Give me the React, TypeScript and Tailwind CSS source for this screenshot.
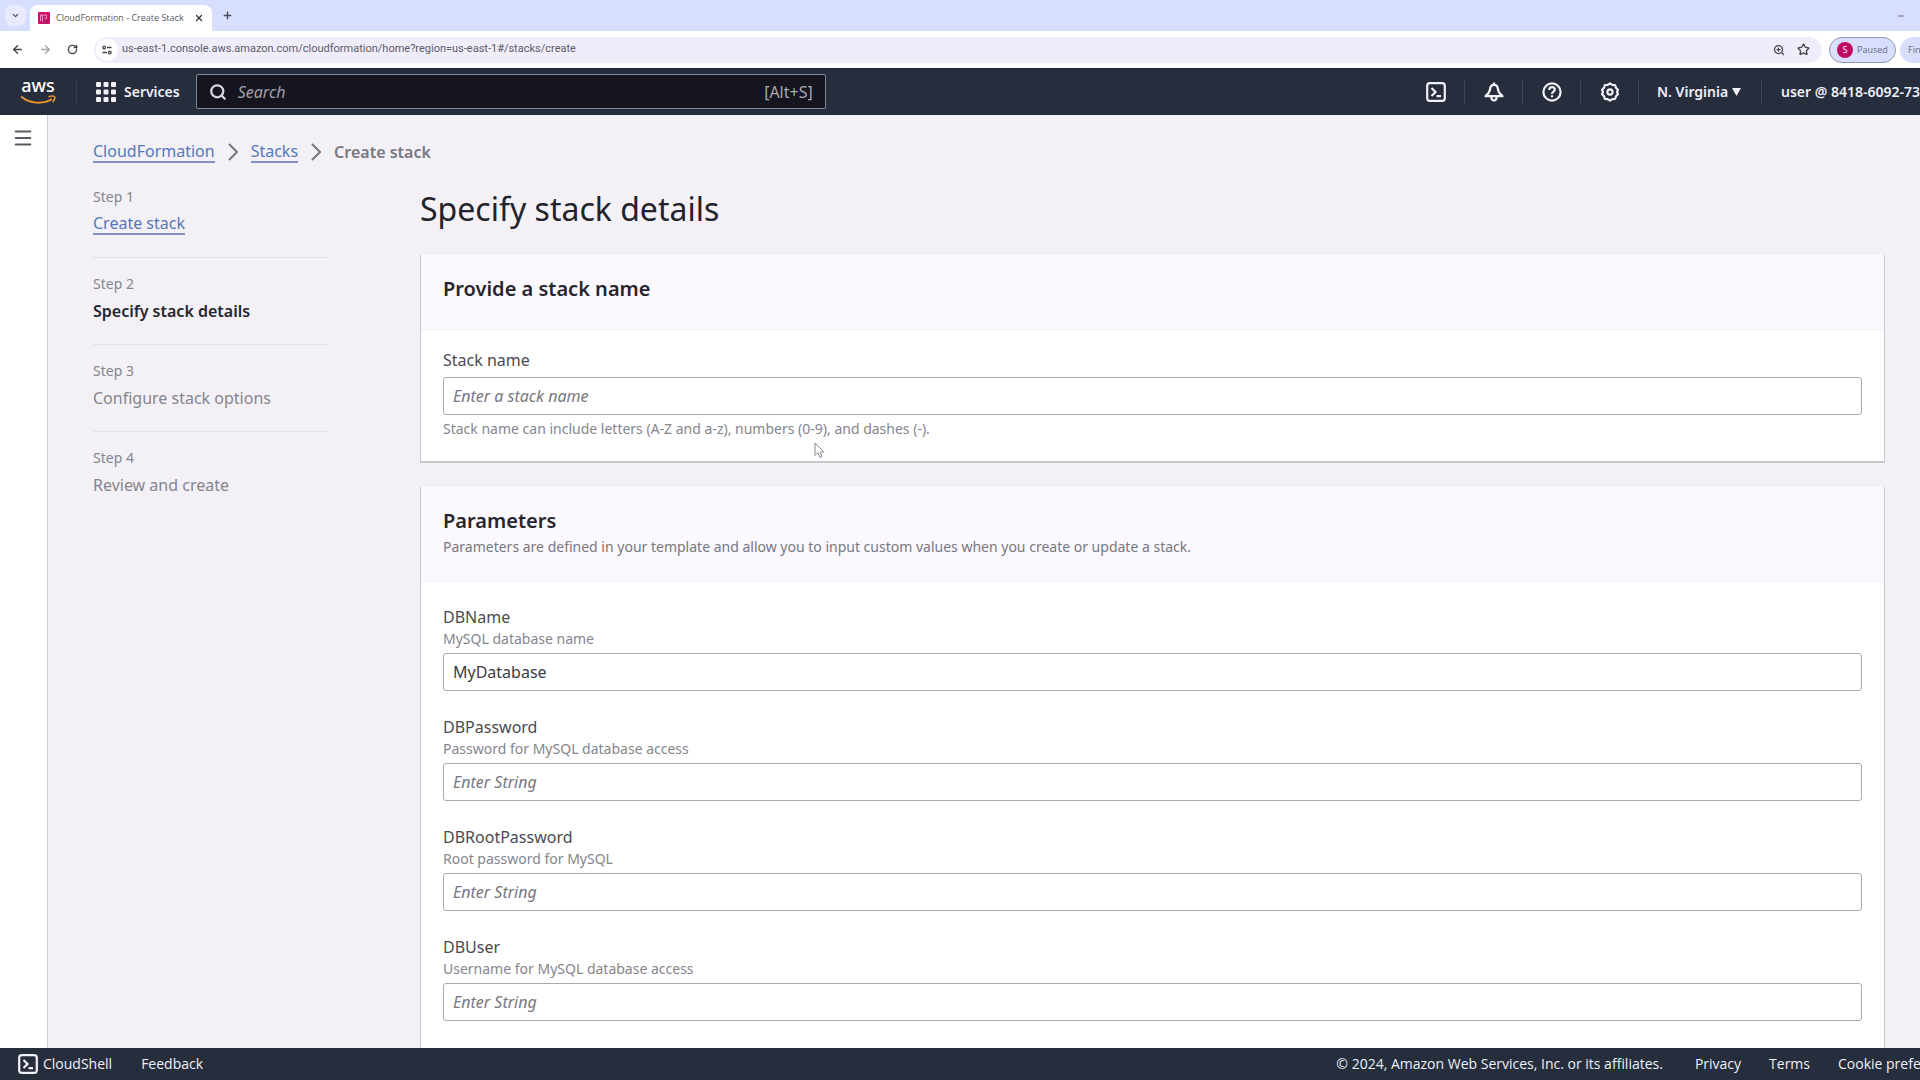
import type { ReactNode } from "react";
import {
	ArrowLeft,
	ArrowRight,
	ChevronDown,
	Menu,
	Minus,
	Plus,
	RotateCw,
	Search,
	Star,
	X,
	ZoomIn,
} from "lucide-react";

type Step = {
	title: string;
	state: "done" | "current" | "todo";
};

type Parameter = {
	name: string;
	description: string;
	value?: string;
};

const steps: Step[] = [
	{ title: "Create stack", state: "done" },
	{ title: "Specify stack details", state: "current" },
	{ title: "Configure stack options", state: "todo" },
	{ title: "Review and create", state: "todo" },
];

const parameters: Parameter[] = [
	{ name: "DBName", description: "MySQL database name", value: "MyDatabase" },
	{ name: "DBPassword", description: "Password for MySQL database access" },
	{ name: "DBRootPassword", description: "Root password for MySQL" },
	{ name: "DBUser", description: "Username for MySQL database access" },
];

const linkClass = "border-b-2 border-[#7f93c4] leading-5 text-[#5578b8]";
const inputClass =
	"h-[38px] w-full rounded-[3px] border border-[#a9a9b0] bg-white px-[9px] text-base text-[#3c3c44] placeholder:text-[#77777f] placeholder:italic";

const TerminalIcon = () => (
	<svg className="size-5" viewBox="0 0 20 20" fill="none" stroke="currentColor" strokeWidth="2.2">
		<rect x="1.2" y="1.2" width="17.6" height="17.6" rx="2.6" />
		<path d="M5.5 6l4 4-4 4M10.5 14.2h4.5" />
	</svg>
);

const BellIcon = () => (
	<svg className="size-5" viewBox="0 0 20 20" fill="none" stroke="currentColor" strokeWidth="2.3" strokeLinejoin="round">
		<path d="M10 2.8c-2.5 0-3.7 1.8-3.9 4.2-.3 3.300-1.400 4.700-4.600 7.200h17c-3.200-2.500-4.300-3.900-4.600-7.200-.2-2.400-1.400-4.200-3.900-4.200zM10 .4v2.400M7.300 14.500c0 2.200 1 3.900 2.700 3.900s2.700-1.700 2.700-3.900" />
	</svg>
);

const HelpIcon = () => (
	<svg className="size-5" viewBox="0 0 20 20" fill="none" stroke="currentColor" strokeWidth="2.2">
		<circle cx="10" cy="10" r="8.6" />
		<path d="M7.200 8c0-1.800 1.200-2.800 2.800-2.800s2.800 1 2.800 2.500c0 2-2.800 2.100-2.800 4.300M10 13.200v2" />
	</svg>
);

const GearIcon = () => (
	<svg className="size-5" viewBox="0 0 20 20" fill="none" stroke="currentColor" strokeWidth="2.2" strokeLinejoin="round">
		<path d="M10 1.300l2.300 1.600 2.800.3.900 2.600 1.900 2-.8 2.200.8 2.200-1.900 2-.9 2.600-2.800.3-2.300 1.600-2.300-1.600-2.800-.3-.9-2.600-1.900-2 .8-2.200-.8-2.200 1.900-2 .9-2.600 2.800-.3z" />
		<circle cx="10" cy="10" r="2.600" />
	</svg>
);

const AwsLogo = () => (
	<a href="#home" aria-label="AWS home" className="flex w-9 flex-col items-center text-white">
		<span className="text-lg leading-3 font-medium">aws</span>
		<svg className="mt-1 h-2.5 w-9" viewBox="0 0 36 10" fill="none" stroke="#e8922e" strokeWidth="2">
			<path d="M1 1.500c9 7.500 22 8 31 2.500" />
			<path d="M28.500 1.700c2.500-.8 5.300-.8 6 0s-.3 3.500-1.800 5.500" strokeWidth="1.600" />
		</svg>
	</a>
);

const BrowserChrome = () => (
	<div className="font-['Open_Sans',sans-serif]">
		<div className="flex h-[31px] items-center bg-[#d8defd] pl-[5px]">
			<button aria-label="Search tabs" className="flex size-[21px] items-center justify-center rounded-lg bg-[#e8ebfe] text-[#44454f]">
				<ChevronDown size={9} strokeWidth={3} />
			</button>
			<div className="ml-1 flex h-[26px] w-[182px] items-center self-end rounded-t-lg bg-white pr-2 pl-2">
				<svg className="size-3 shrink-0" viewBox="0 0 12 12" fill="none">
					<rect width="12" height="12" rx="1" fill="#cf1068" />
					<path d="M2.500 9v-6M4.500 9.500v-6.500h4v3.500h-2M2.500 3h2" stroke="#f29ac2" />
				</svg>
				<span className="ml-1.5 grow text-[9px] whitespace-nowrap text-[#5a5a62]">CloudFormation - Create Stack</span>
				<button aria-label="Close tab" className="text-[#33343c]">
					<X size={10} strokeWidth={3} />
				</button>
			</div>
			<button aria-label="New tab" className="ml-2.5 text-[#4a4b58]">
				<Plus size={11} strokeWidth={3} />
			</button>
			<button aria-label="Minimize" className="mr-3.5 ml-auto text-[#5b5d6e]">
				<Minus size={10} strokeWidth={2} />
			</button>
		</div>

		<div className="flex h-[37px] items-center overflow-hidden bg-white pl-[11px] text-[#44454c]">
			<button aria-label="Back"><ArrowLeft size={13} strokeWidth={2.500} /></button>
			<button aria-label="Forward" className="ml-[15px] text-[#a5a5ad]"><ArrowRight size={13} strokeWidth={2.500} /></button>
			<button aria-label="Reload" className="ml-[15px]"><RotateCw size={11} strokeWidth={3} /></button>
			<div className="ml-4 flex h-[26px] grow items-center rounded-full bg-[#f0edfb] pr-3 pl-0.5">
				<button aria-label="Site information" className="flex size-[22px] items-center justify-center rounded-full bg-white">
					<svg className="size-2.5" viewBox="0 0 10 10" fill="none" stroke="currentColor" strokeWidth="1.300">
						<circle cx="2.200" cy="2.500" r="1.300" />
						<path d="M5 2.500h4.500M.5 7.500h4.500" />
						<circle cx="7.800" cy="7.500" r="1.300" />
					</svg>
				</button>
				<input
					aria-label="Address"
					className="ml-1 grow bg-transparent font-[Roboto,sans-serif] text-[11px] text-[#5c5b66] outline-none"
					defaultValue="us-east-1.console.aws.amazon.com/cloudformation/home?region=us-east-1#/stacks/create"
				/>
				<button aria-label="Zoom"><ZoomIn size={12} strokeWidth={2.500} /></button>
				<button aria-label="Bookmark" className="ml-3"><Star size={13} strokeWidth={2.500} /></button>
			</div>
			<button className="ml-[7px] flex h-[26px] w-[67px] shrink-0 items-center gap-1 rounded-full border border-[#9197b5] bg-[#d8defb] pl-[7px] text-[9px] text-[#6a6d84]">
				<span className="flex size-4 items-center justify-center rounded-full bg-[#c00a62] text-[9px] text-white">S</span>
				Paused
			</button>
			<button className="ml-1 h-[26px] w-5 shrink-0 overflow-hidden rounded-l-full bg-[#d8defb] pl-2 text-left text-[9px] whitespace-nowrap text-[#6a6d84]">
				Finish update
			</button>
		</div>
	</div>
);

const NavButton = ({ label, children }: { label: string; children: ReactNode }) => (
	<button aria-label={label} className="flex h-[26px] w-[58px] items-center justify-center border-r border-[#3d4456]">
		{children}
	</button>
);

const TopNav = () => (
	<header className="flex h-12 items-center bg-[#262d3d] pl-5 text-sm font-semibold text-[#f0f0f6]">
		<AwsLogo />
		<div className="ml-5 h-[26px] w-px bg-[#343b4c]" />
		<button className="ml-[19px] flex items-center gap-2">
			<svg className="size-5" viewBox="0 0 20 20" fill="currentColor">
				{[0, 7.500, 15].map((y) =>
					[0, 7.500, 15].map((x) => (
						<rect key={`${x}-${y}`} x={x} y={y} width="5" height="5" rx="1" />
					))
				)}
			</svg>
			Services
		</button>
		<label className="ml-4 flex h-[35px] w-[630px] items-center rounded-[2px] border border-[#7d8a94] bg-[#15151f] px-3 font-normal">
			<Search size={18} strokeWidth={3} className="text-[#d8d8e0]" />
			<input
				aria-label="Search"
				placeholder="Search"
				className="ml-[11px] min-w-0 grow bg-transparent text-base outline-none placeholder:text-[#a0a1ab] placeholder:italic"
			/>
			<span className="text-base text-[#a9aab4]">[Alt+S]</span>
		</label>
		<div className="ml-auto flex items-center whitespace-nowrap">
			<NavButton label="CloudShell"><TerminalIcon /></NavButton>
			<NavButton label="Notifications"><BellIcon /></NavButton>
			<NavButton label="Help"><HelpIcon /></NavButton>
			<NavButton label="Settings"><GearIcon /></NavButton>
			<button className="flex h-[26px] w-[123px] items-center gap-1 border-r border-[#3d4456] pl-[18px]">
				N. Virginia
				<svg className="h-2 w-[9px]" viewBox="0 0 9 8" fill="currentColor">
					<path d="M0 0h9L4.500 8z" />
				</svg>
			</button>
			<button className="w-[158px] overflow-hidden pl-[19px] text-left">user @ 8418-6092-7390</button>
		</div>
	</header>
);

const Chevron = () => (
	<svg className="mx-[13px] h-[18px] w-2.5" viewBox="0 0 10 18" fill="none" stroke="#77777f" strokeWidth="2">
		<path d="M1 1l8 8-8 8" />
	</svg>
);

const Breadcrumbs = () => (
	<nav aria-label="Breadcrumb" className="flex items-center text-base">
		<a href="#cloudformation" className={linkClass}>CloudFormation</a>
		<Chevron />
		<a href="#stacks" className={linkClass}>Stacks</a>
		<Chevron />
		<span className="leading-[22px] font-semibold text-[#77777f]">Create stack</span>
	</nav>
);

const StepList = () => (
	<ol className="w-[235px] shrink-0">
		{steps.map((step, index) => (
			<li key={step.title} className="h-[87px] border-b border-[#e4e2e9] pt-4 last:border-0">
				<div className="text-sm leading-5 text-[#85858d]">Step {index + 1}</div>
				<div className="mt-1.5 flex text-base leading-[22px]">
					{step.state === "done" && (
						<a href="#create" className={linkClass}>{step.title}</a>
					)}
					{step.state === "current" && (
						<span className="font-semibold text-[#26262e]">{step.title}</span>
					)}
					{step.state === "todo" && <span className="text-[#85858d]">{step.title}</span>}
				</div>
			</li>
		))}
	</ol>
);

const Card = ({ header, children }: { header: ReactNode; children: ReactNode }) => (
	<section className="border border-t-0 border-b-2 border-[#c9c8ce] bg-white">
		<div className="border-b border-[#f3f1f7] bg-[#fcf9fe] px-[22px] pt-5">{header}</div>
		<div className="px-[22px]">{children}</div>
	</section>
);

const App = () => {
	return (
		<div className="flex h-screen flex-col overflow-hidden bg-[#f3f1f6] font-['Noto_Sans',sans-serif]">
			<BrowserChrome />
			<TopNav />

			<div className="flex min-h-0 grow">
				<div className="w-12 shrink-0 border-r border-[#cfced4] bg-white pt-3 pl-3">
					<button aria-label="Open navigation" className="text-[#5a5a62]">
						<Menu size={22} strokeWidth={2.200} />
					</button>
				</div>

				<div className="min-w-0 grow overflow-hidden pt-[26px] pr-[35px] pl-[45px]">
					<Breadcrumbs />
					<div className="flex">
						<div className="mt-2">
							<StepList />
						</div>

						<main className="ml-[92px] min-w-0 grow pt-[26px]">
							<h1 className="text-[32px] leading-10 text-[#22222a]">Specify stack details</h1>

							<div className="mt-[26px] flex flex-col gap-6">
								<Card
									header={
										<h2 className="h-[54px] text-xl leading-7 font-semibold text-[#26262e]">
											Provide a stack name
										</h2>
									}
								>
									<div className="pt-[18px] pb-[22px]">
										<label htmlFor="stack-name" className="block text-base leading-6 text-[#4a4a52]">
											Stack name
										</label>
										<input id="stack-name" className={`${inputClass} mt-[5px]`} placeholder="Enter a stack name" />
										<p className="mt-1 text-sm leading-5 text-[#85858d]">
											Stack name can include letters (A-Z and a-z), numbers (0-9), and dashes (-).
										</p>
									</div>
								</Card>

								<Card
									header={
										<div className="h-[74px]">
											<h2 className="text-xl leading-7 font-semibold text-[#26262e]">Parameters</h2>
											<p className="mt-0.5 text-sm leading-5 text-[#77777f]">
												Parameters are defined in your template and allow you to input custom values when you
												create or update a stack.
											</p>
										</div>
									}
								>
									<div className="flex flex-col gap-6 pt-[23px] pb-10">
										{parameters.map((parameter) => (
											<div key={parameter.name}>
												<label htmlFor={parameter.name} className="block text-base leading-6 text-[#4a4a52]">
													{parameter.name}
												</label>
												<p className="text-sm leading-5 text-[#85858d]">{parameter.description}</p>
												<input
													id={parameter.name}
													className={`${inputClass} mt-1`}
													placeholder="Enter String"
													defaultValue={parameter.value}
												/>
											</div>
										))}
									</div>
								</Card>
							</div>
						</main>
					</div>
				</div>
			</div>

			<footer className="flex h-8 shrink-0 items-center bg-[#262d3d] pl-[18px] font-['Open_Sans',sans-serif] text-sm font-medium whitespace-nowrap text-[#f0f0f6]">
				<button className="flex items-center gap-[5px]">
					<TerminalIcon />
					CloudShell
				</button>
				<button className="ml-[29px]">Feedback</button>
				<span className="ml-auto">© 2024, Amazon Web Services, Inc. or its affiliates.</span>
				<a href="#privacy" className="ml-8">Privacy</a>
				<a href="#terms" className="ml-7">Terms</a>
				<a href="#cookies" className="ml-7 w-[82px] overflow-hidden">Cookie preferences</a>
			</footer>

			{/* mouse pointer */}
			<svg className="absolute top-[442px] left-[814px] h-[17px] w-[11px]" viewBox="0 0 11 17" fill="#fff" stroke="#8c8c94">
				<path d="M1 1v12.500l3-2.700 2 4.700 2-.9-2-4.500h4z" />
			</svg>
		</div>
	);
};

export default App;
